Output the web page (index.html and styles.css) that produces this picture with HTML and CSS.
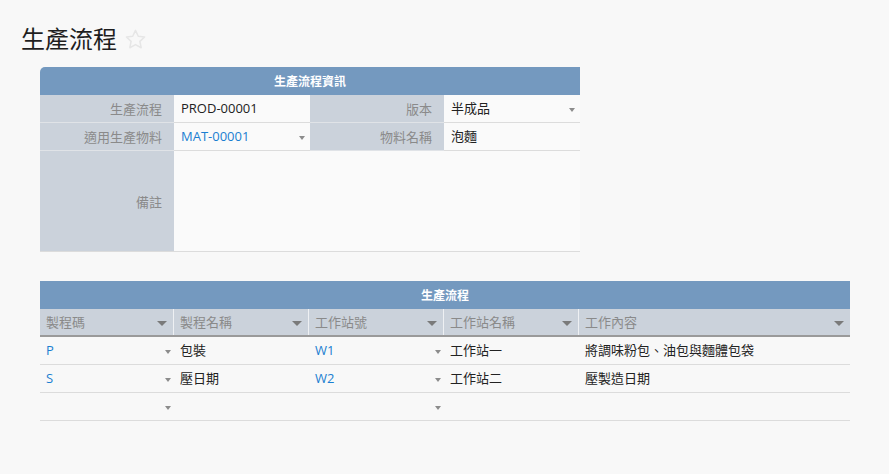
FILE: index.html
```html
<!DOCTYPE html>
<html lang="zh-Hant">
<head>
<meta charset="utf-8">
<link rel="stylesheet" href="styles.css">
</head>
<body>
<div class="page">
  <div class="title-row">
    <h1 class="title">生產流程</h1>
    <svg class="star" width="23" height="23" viewBox="0 0 24 24"><path d="M12 2.5l2.9 6.1 6.6.8-4.9 4.6 1.3 6.6L12 17.3l-5.9 3.3 1.3-6.6L2.5 9.4l6.6-.8z" fill="none" stroke="#e6e6e6" stroke-width="1.6" stroke-linejoin="round"/></svg>
  </div>

  <div class="form">
    <div class="form-head">生產流程資訊</div>
    <div class="form-grid">
      <div class="lbl">生產流程</div>
      <div class="val">PROD-00001</div>
      <div class="lbl">版本</div>
      <div class="val">半成品<span class="arrow"></span></div>

      <div class="lbl">適用生產物料</div>
      <div class="val link">MAT-00001<span class="arrow"></span></div>
      <div class="lbl">物料名稱</div>
      <div class="val">泡麵</div>

      <div class="lbl tall">備註</div>
      <div class="val tall wide"></div>
    </div>
  </div>

  <div class="table">
    <div class="table-head">生產流程</div>
    <div class="trow cols">
      <div class="th">製程碼<span class="harrow"></span></div>
      <div class="th">製程名稱<span class="harrow"></span></div>
      <div class="th">工作站號<span class="harrow"></span></div>
      <div class="th">工作站名稱<span class="harrow"></span></div>
      <div class="th last">工作內容<span class="harrow"></span></div>
    </div>
    <div class="trow data">
      <div class="td link">P<span class="arrow"></span></div>
      <div class="td">包裝</div>
      <div class="td link">W1<span class="arrow"></span></div>
      <div class="td">工作站一</div>
      <div class="td">將調味粉包、油包與麵體包袋</div>
    </div>
    <div class="trow data">
      <div class="td link">S<span class="arrow"></span></div>
      <div class="td">壓日期</div>
      <div class="td link">W2<span class="arrow"></span></div>
      <div class="td">工作站二</div>
      <div class="td">壓製造日期</div>
    </div>
    <div class="trow data">
      <div class="td"><span class="arrow"></span></div>
      <div class="td"></div>
      <div class="td"><span class="arrow"></span></div>
      <div class="td"></div>
      <div class="td"></div>
    </div>
  </div>
</div>
</body>
</html>
```

FILE: styles.css
```css
html, body {
  margin: 0;
  padding: 0;
  background: #f8f8f8;
}
body {
  font-family: "Open Sans", "Noto Sans CJK TC", sans-serif;
  font-size: 13px;
  color: #222;
}
.page {
  padding: 20px 0 0 0;
}
.title-row {
  display: flex;
  align-items: center;
  gap: 7px;
  padding-left: 21px;
  height: 36px;
}
.title {
  margin: 0;
  font-family: "Noto Sans CJK TC", sans-serif;
  font-weight: 400;
  font-size: 24px;
  line-height: 36px;
  color: #1e1e1e;
}
.star {
  margin-top: 3px;
}

.form {
  margin: 11px 0 0 40px;
  width: 540px;
}
.form-head {
  height: 28px;
  line-height: 28px;
  background: #7499bf;
  color: #fff;
  font-weight: 700;
  font-size: 12px;
  text-align: center;
  border-top-left-radius: 5px;
  font-family: "Noto Sans CJK TC", sans-serif;
}
.form-grid {
  display: grid;
  grid-template-columns: 134px 136px 134px 136px;
  grid-auto-rows: 28px;
}
.lbl {
  background: #cbd2db;
  color: #8a8a8a;
  text-align: right;
  padding-right: 12px;
  line-height: 27px;
  border-bottom: 1px solid #e0e3e7;
  font-family: "Noto Sans CJK TC", sans-serif;
}
.val {
  position: relative;
  background: #fafafa;
  padding-left: 7px;
  line-height: 27px;
  border-bottom: 1px solid #dcdcdc;
}
.form-grid .tall {
  height: 101px;
  line-height: 101px;
  box-sizing: border-box;
  border-bottom: 1px solid #dcdcdc;
}
.val.wide {
  grid-column: span 3;
}
.link {
  color: #1b7fd1;
}
.arrow {
  position: absolute;
  right: 8px;
  top: 13px;
  width: 0;
  height: 0;
  border-left: 3.5px solid transparent;
  border-right: 3.5px solid transparent;
  border-top: 4px solid #8c8c8c;
}
.val .arrow {
  right: 5px;
}

.table {
  margin: 102px 0 0 40px;
  width: 810px;
}
.table-head {
  height: 28px;
  line-height: 28px;
  background: #7499bf;
  color: #fff;
  font-weight: 700;
  font-size: 12px;
  text-align: center;
  font-family: "Noto Sans CJK TC", sans-serif;
}
.trow {
  display: grid;
  grid-template-columns: 134px 135px 135px 135px 271px;
}
.cols {
  height: 26px;
  background: #cbd2db;
  border-bottom: 2px solid #9a9a9a;
}
.th {
  position: relative;
  color: #8a8a8a;
  line-height: 26px;
  padding-left: 6px;
  border-right: 1px solid #eef0f3;
  font-family: "Noto Sans CJK TC", sans-serif;
}
.th.last {
  border-right: none;
}
.harrow {
  position: absolute;
  right: 6px;
  top: 12px;
  width: 0;
  height: 0;
  border-left: 5px solid transparent;
  border-right: 5px solid transparent;
  border-top: 5px solid #7a7a7a;
}
.data {
  height: 28px;
}
.td {
  position: relative;
  line-height: 27px;
  padding-left: 6px;
  border-bottom: 1px solid #dcdcdc;
}
.td .arrow {
  right: 3px;
}
```
